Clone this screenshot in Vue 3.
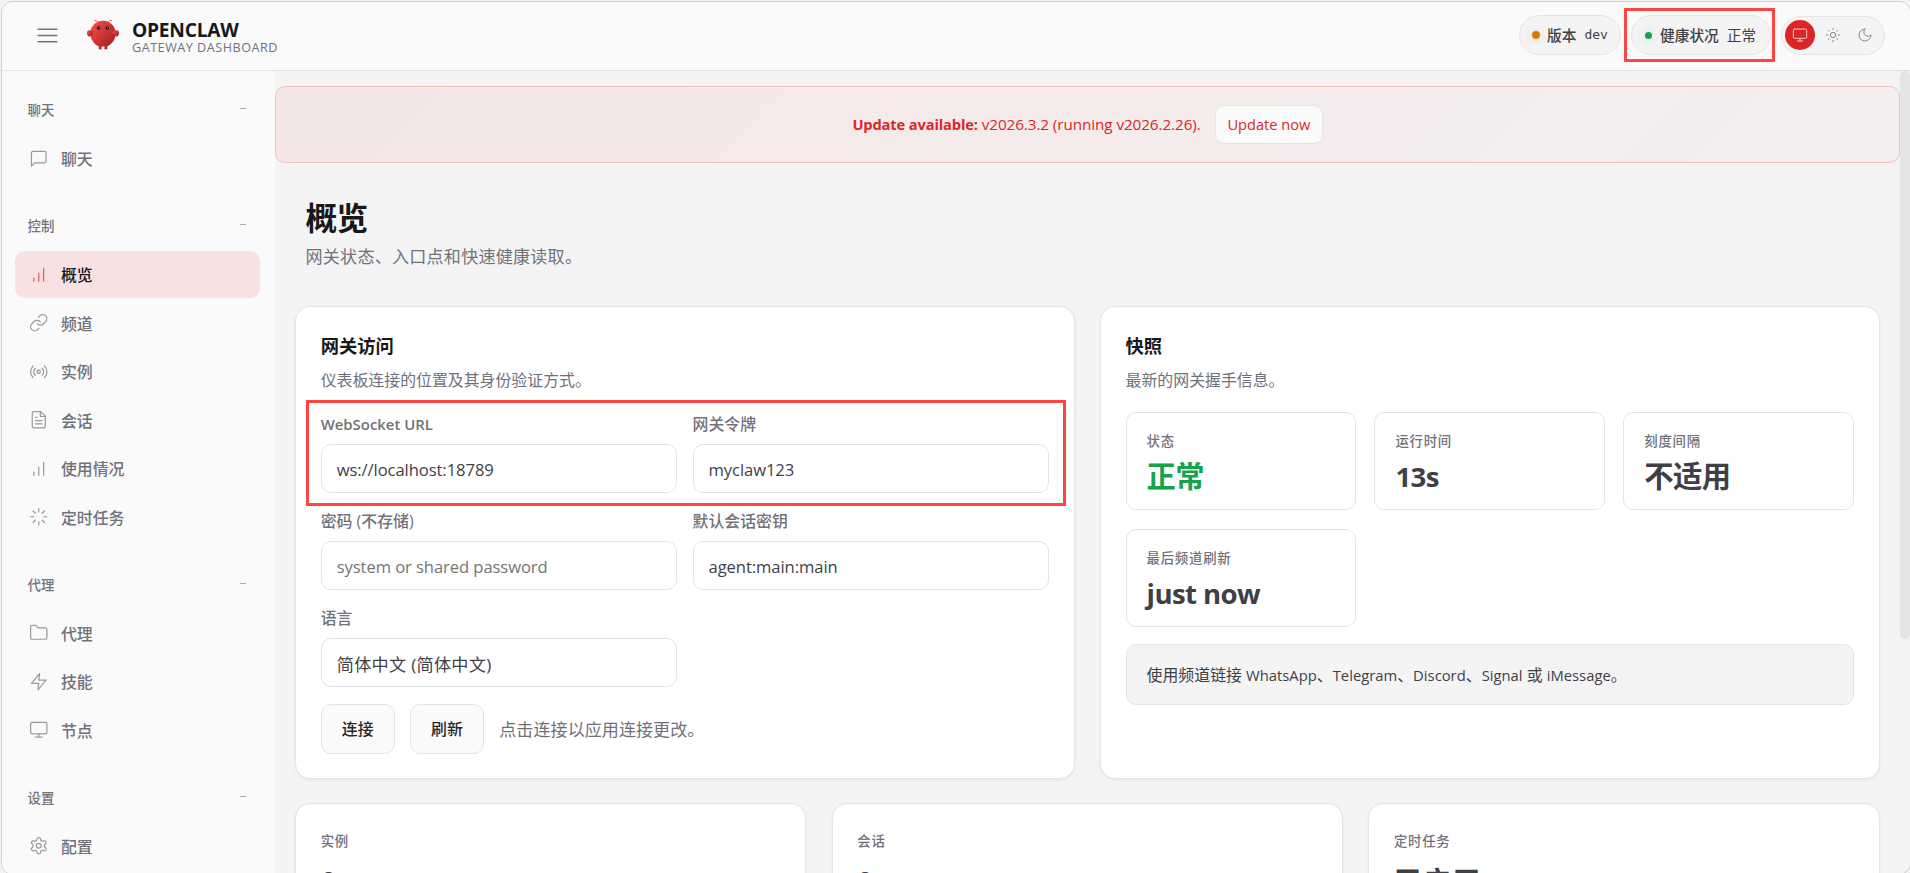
<template>
  <div class="shell">
    <header class="topbar">
      <div class="topbar-left">
        <button class="menu-toggle">
          <svg viewBox="0 0 24 24" class="icon"><path d="M3 6h18M3 12h18M3 18h18" /></svg>
        </button>
        <svg class="logo" viewBox="0 0 120 120">
          <defs>
            <linearGradient id="claw" x1="0%" y1="0%" x2="100%" y2="100%">
              <stop offset="0%" stop-color="#ff4d4d" />
              <stop offset="100%" stop-color="#991b1b" />
            </linearGradient>
          </defs>
          <g fill="url(#claw)">
            <path d="M60 10C30 10 15 35 15 55C15 75 30 95 45 100V110H55V100C55 100 60 102 65 100V110H75V100C90 95 105 75 105 55C105 35 90 10 60 10Z" />
            <path d="M20 45C5 40 0 50 5 60C10 70 20 65 25 55C28 48 25 45 20 45Z" />
            <path d="M100 45C115 40 120 50 115 60C110 70 100 65 95 55C92 48 95 45 100 45Z" />
          </g>
          <path d="M45 15Q35 5 30 8M75 15Q85 5 90 8" fill="none" stroke="#ff4d4d" stroke-width="3" stroke-linecap="round" />
          <circle cx="45" cy="35" r="6" fill="#050810" />
          <circle cx="75" cy="35" r="6" fill="#050810" />
          <circle cx="46" cy="34" r="2.5" fill="#00e5cc" />
          <circle cx="76" cy="34" r="2.5" fill="#00e5cc" />
        </svg>
        <div class="brand">
          <div class="brand-title">OPENCLAW</div>
          <div class="brand-sub">GATEWAY DASHBOARD</div>
        </div>
      </div>

      <div class="topbar-right">
        <div class="pill version">
          <span class="dot warn"></span>
          <span>版本</span>
          <span class="mono">dev</span>
        </div>
        <div class="pill health">
          <span class="dot ok"></span>
          <span>健康状况</span>
          <span class="mono cjk">正常</span>
          <div class="marker marker-health"></div>
        </div>
        <div class="theme-toggle">
          <button v-for="(t, i) in themes" :key="t" class="theme-btn" :class="{ active: i === 0 }">
            <svg viewBox="0 0 24 24" class="icon" v-html="icons[t]"></svg>
          </button>
        </div>
      </div>
    </header>

    <div class="body">
      <aside class="nav">
        <div v-for="group in groups" :key="group.label" class="nav-group">
          <div class="nav-label">
            <span>{{ group.label }}</span>
            <span class="nav-dash"></span>
          </div>
          <div class="nav-items">
            <a v-for="item in group.items" :key="item.name" class="nav-item" :class="{ active: item.active }">
              <svg viewBox="0 0 24 24" class="icon" v-html="icons[item.icon]"></svg>
              <span>{{ item.name }}</span>
            </a>
          </div>
        </div>
      </aside>

      <main class="content">
        <div class="update-banner">
          <span class="update-text"><strong>Update available:</strong> v2026.3.2 (running v2026.2.26).</span>
          <button class="update-btn">Update now</button>
        </div>

        <section class="page-header">
          <h1>概览</h1>
          <p>网关状态、入口点和快速健康读取。</p>
        </section>

        <section class="cards two">
          <div class="card">
            <h2>网关访问</h2>
            <p class="card-sub">仪表板连接的位置及其身份验证方式。</p>
            <div class="form-grid">
              <label v-for="f in fields" :key="f.label" class="field">
                <span :class="{ latin: f.latin }">{{ f.label }}</span>
                <input v-model="f.value" :placeholder="f.placeholder" :class="{ zh: f.zh }" />
              </label>
              <div class="marker marker-form"></div>
            </div>
            <div class="actions">
              <button class="btn">连接</button>
              <button class="btn">刷新</button>
              <span class="hint">点击连接以应用连接更改。</span>
            </div>
          </div>

          <div class="card">
            <h2>快照</h2>
            <p class="card-sub">最新的网关握手信息。</p>
            <div class="stats">
              <div v-for="s in stats" :key="s.label" class="stat">
                <div class="stat-label">{{ s.label }}</div>
                <div class="stat-value" :class="s.kind">{{ s.value }}</div>
              </div>
            </div>
            <div class="callout">使用频道链接 <span class="en">WhatsApp</span>、<span class="en">Telegram</span>、<span class="en">Discord</span>、<span class="en">Signal</span> 或 <span class="en">iMessage</span>。</div>
          </div>
        </section>

        <section class="cards three">
          <div v-for="c in counters" :key="c.label" class="card">
            <div class="stat-label">{{ c.label }}</div>
            <div class="stat-value" :class="c.kind">{{ c.value }}</div>
          </div>
        </section>
      </main>
      <div class="scrollbar"></div>
    </div>
  </div>
</template>

<script setup>
import { ref } from 'vue'

const themes = ['monitor', 'sun', 'moon']

const icons = {
  chat: '<path d="M21 15a2 2 0 0 1-2 2H7l-4 4V5a2 2 0 0 1 2-2h14a2 2 0 0 1 2 2z"/>',
  bars: '<path d="M12 20V10M18 20V4M6 20v-4"/>',
  link: '<path d="M10 13a5 5 0 0 0 7.54.54l3-3a5 5 0 0 0-7.07-7.07l-1.72 1.71"/><path d="M14 11a5 5 0 0 0-7.54-.54l-3 3a5 5 0 0 0 7.07 7.07l1.71-1.71"/>',
  radio: '<circle cx="12" cy="12" r="2"/><path d="M16.24 7.76a6 6 0 0 1 0 8.49m-8.48-.01a6 6 0 0 1 0-8.49m11.31-2.82a10 10 0 0 1 0 14.14m-14.14 0a10 10 0 0 1 0-14.14"/>',
  file: '<path d="M14.5 2H6a2 2 0 0 0-2 2v16a2 2 0 0 0 2 2h12a2 2 0 0 0 2-2V7.5L14.5 2z"/><path d="M14 2v6h6M16 13H8M16 17H8M10 9H8"/>',
  loader: '<path d="M12 2v4M12 18v4M4.93 4.93l2.83 2.83M16.24 16.24l2.83 2.83M2 12h4M18 12h4M4.93 19.07l2.83-2.83M16.24 7.76l2.83-2.83"/>',
  folder: '<path d="M4 20h16a2 2 0 0 0 2-2V8a2 2 0 0 0-2-2h-7.93a2 2 0 0 1-1.66-.9l-.82-1.2A2 2 0 0 0 7.93 3H4a2 2 0 0 0-2 2v13c0 1.1.9 2 2 2Z"/>',
  zap: '<path d="M13 2L3 14h9l-1 8 10-12h-9l1-8z"/>',
  monitor: '<rect x="2" y="3" width="20" height="14" rx="2"/><path d="M8 21h8M12 17v4"/>',
  gear: '<path d="M12.22 2h-.44a2 2 0 0 0-2 2v.18a2 2 0 0 1-1 1.73l-.43.25a2 2 0 0 1-2 0l-.15-.08a2 2 0 0 0-2.73.73l-.22.38a2 2 0 0 0 .73 2.73l.15.1a2 2 0 0 1 1 1.72v.51a2 2 0 0 1-1 1.74l-.15.09a2 2 0 0 0-.73 2.73l.22.38a2 2 0 0 0 2.73.73l.15-.08a2 2 0 0 1 2 0l.43.25a2 2 0 0 1 1 1.73V20a2 2 0 0 0 2 2h.44a2 2 0 0 0 2-2v-.18a2 2 0 0 1 1-1.73l.43-.25a2 2 0 0 1 2 0l.15.08a2 2 0 0 0 2.73-.73l.22-.39a2 2 0 0 0-.73-2.73l-.15-.08a2 2 0 0 1-1-1.74v-.5a2 2 0 0 1 1-1.74l.15-.09a2 2 0 0 0 .73-2.73l-.22-.38a2 2 0 0 0-2.73-.73l-.15.08a2 2 0 0 1-2 0l-.43-.25a2 2 0 0 1-1-1.73V4a2 2 0 0 0-2-2z"/><circle cx="12" cy="12" r="3"/>',
  sun: '<circle cx="12" cy="12" r="4"/><path d="M12 2v2M12 20v2M4.93 4.93l1.41 1.41M17.66 17.66l1.41 1.41M2 12h2M20 12h2M6.34 17.66l-1.41 1.41M19.07 4.93l-1.41 1.41"/>',
  moon: '<path d="M12 3a6 6 0 0 0 9 9 9 9 0 1 1-9-9z"/>'
}

const groups = [
  { label: '聊天', items: [{ name: '聊天', icon: 'chat' }] },
  {
    label: '控制',
    items: [
      { name: '概览', icon: 'bars', active: true },
      { name: '频道', icon: 'link' },
      { name: '实例', icon: 'radio' },
      { name: '会话', icon: 'file' },
      { name: '使用情况', icon: 'bars' },
      { name: '定时任务', icon: 'loader' }
    ]
  },
  {
    label: '代理',
    items: [
      { name: '代理', icon: 'folder' },
      { name: '技能', icon: 'zap' },
      { name: '节点', icon: 'monitor' }
    ]
  },
  { label: '设置', items: [{ name: '配置', icon: 'gear' }] }
]

const fields = ref([
  { label: 'WebSocket URL', value: 'ws://localhost:18789', latin: true },
  { label: '网关令牌', value: 'myclaw123' },
  { label: '密码 (不存储)', value: '', placeholder: 'system or shared password' },
  { label: '默认会话密钥', value: 'agent:main:main' },
  { label: '语言', value: '简体中文 (简体中文)', zh: true }
])

const stats = [
  { label: '状态', value: '正常', kind: 'good' },
  { label: '运行时间', value: '13s', kind: 'latin' },
  { label: '刻度间隔', value: '不适用' },
  { label: '最后频道刷新', value: 'just now', kind: 'latin' }
]

const counters = [
  { label: '实例', value: '0', kind: 'latin' },
  { label: '会话', value: '0', kind: 'latin' },
  { label: '定时任务', value: '已启用' }
]
</script>

<style>
body {
  background: #f3f3f3;
  overflow: hidden;
}
</style>

<style scoped>
* {
  box-sizing: border-box;
}

.shell {
  width: 1910px;
  height: 874px;
  margin: 1px 0 0 1px;
  border: 1px solid #cfcfcf;
  border-radius: 12px;
  overflow: hidden;
  display: flex;
  flex-direction: column;
  background: #f4f4f5;
  color: #3f3f46;
  font-family: "Open Sans", "Noto Sans CJK SC", sans-serif;
  font-size: 16px;
}

h1, h2, p {
  margin: 0;
}

button, input {
  font-family: inherit;
}

.icon {
  fill: none;
  stroke: currentColor;
  stroke-width: 1.5;
  stroke-linecap: round;
  stroke-linejoin: round;
  flex-shrink: 0;
}

/* top bar */
.topbar {
  height: 69px;
  flex-shrink: 0;
  display: flex;
  align-items: center;
  justify-content: space-between;
  padding: 0 25px 2px 23px;
  background: #fafafa;
  border-bottom: 1px solid #e2e2e5;
}

.topbar-left {
  display: flex;
  align-items: center;
}

.menu-toggle {
  width: 44px;
  height: 44px;
  padding: 0;
  border: none;
  background: none;
  color: #71717a;
  display: flex;
  align-items: center;
  justify-content: center;
}

.menu-toggle .icon {
  width: 25px;
  height: 25px;
}

.logo {
  width: 34px;
  height: 34px;
  margin-left: 16.5px;
}

.brand {
  margin-left: 12.5px;
  margin-top: 5px;
}

.brand-title {
  font-size: 19.2px;
  line-height: 20px;
  font-weight: 700;
  letter-spacing: -0.25px;
  color: #18181b;
}

.brand-sub {
  font-size: 12.6px;
  line-height: 15px;
  font-weight: 500;
  letter-spacing: 0.52px;
  color: #71717a;
}

.topbar-right {
  display: flex;
  align-items: center;
  gap: 10px;
}

.pill {
  position: relative;
  height: 39.5px;
  display: flex;
  align-items: center;
  border: 1px solid #e4e4e7;
  border-radius: 20px;
  background: #f4f4f5;
  font-size: 14.7px;
  font-weight: 500;
  white-space: nowrap;
}

.pill > span:not(.dot) {
  padding-bottom: 2px;
}

.version {
  width: 102px;
  padding-left: 12px;
}

.health {
  width: 140px;
  padding-left: 13px;
}

.dot {
  width: 8px;
  height: 8px;
  margin-right: 7px;
  border-radius: 50%;
}

.health .dot {
  width: 7px;
  height: 7px;
  margin-right: 8px;
}

.warn {
  background: #d97706;
  box-shadow: 0 0 10px rgba(217, 119, 6, 0.3);
}

.ok {
  background: #16a34a;
  box-shadow: 0 0 10px rgba(22, 163, 74, 0.3);
}

.mono {
  margin-left: 8px;
  font-family: "DejaVu Sans Mono", monospace;
  font-size: 13px;
  font-weight: 400;
}

.mono.cjk {
  font-family: "Noto Sans CJK SC", sans-serif;
  font-size: 14.7px;
}

.theme-toggle {
  width: 104px;
  height: 39px;
  display: flex;
  align-items: center;
  gap: 2.5px;
  padding-left: 3px;
  border: 1px solid #e4e4e7;
  border-radius: 20px;
  background: #f4f4f5;
}

.theme-btn {
  width: 30px;
  height: 30px;
  padding: 0;
  border: none;
  border-radius: 50%;
  background: none;
  color: #85858c;
  display: flex;
  align-items: center;
  justify-content: center;
}

.theme-btn .icon {
  width: 16px;
  height: 16px;
}

.theme-btn.active {
  background: #dc2626;
  color: #f8c9c9;
}

.marker {
  position: absolute;
  border: 3px solid #ff4444;
  pointer-events: none;
}

.marker-health {
  left: -8px;
  top: -8px;
  width: 151px;
  height: 54px;
}

/* layout */
.body {
  flex: 1;
  min-height: 0;
  display: flex;
}

.nav {
  width: 273px;
  flex-shrink: 0;
  padding: 23.3px 15px 0 13px;
  background: #fafafa;
}

.nav-group {
  margin-bottom: 28.4px;
}

.nav-label {
  height: 30px;
  display: flex;
  align-items: center;
  justify-content: space-between;
  padding: 0 14px 0 12.5px;
  margin-bottom: 10.7px;
  font-size: 13.4px;
  font-weight: 500;
  color: #71717a;
}

.nav-dash {
  width: 6.5px;
  height: 1px;
  margin-top: -1px;
  background: #a8a8ae;
}

.nav-items {
  display: flex;
  flex-direction: column;
  gap: 1.5px;
}

.nav-item {
  height: 47px;
  display: flex;
  align-items: center;
  gap: 12px;
  padding-left: 14.4px;
  border-radius: 10px;
  font-size: 15.9px;
  font-weight: 500;
  color: #71717a;
}

.nav-item .icon {
  width: 19.5px;
  height: 19.5px;
  opacity: 0.7;
}

.nav-item.active {
  background: #f8e1e1;
  color: #18181b;
}

.nav-item.active .icon {
  color: #dc2626;
}

.content {
  width: 1625px;
  flex-shrink: 0;
  overflow: hidden;
}

.scrollbar {
  width: 10px;
  height: 568px;
  border-radius: 5px;
  background: #e4e4e7;
}

.update-banner {
  height: 76.4px;
  margin-top: 15.3px;
  display: flex;
  align-items: center;
  justify-content: center;
  gap: 14.5px;
  border: 1px solid #f5bfbf;
  border-radius: 10px;
  background: linear-gradient(135deg, #f5e6e6, #f5ebeb 50%, #f2efef);
  color: #dc2626;
}

.update-text {
  font-size: 15.3px;
  font-weight: 500;
  letter-spacing: -0.1px;
}

.update-text strong {
  font-size: 14.7px;
  letter-spacing: -0.15px;
}

.update-btn {
  height: 38.6px;
  width: 107.5px;
  padding: 0;
  border: 1px solid #e4e4e7;
  border-radius: 9px;
  background: #fafafa;
  color: #dc2626;
  font-size: 14.6px;
  font-weight: 500;
}

.page-header {
  padding: 35px 30.5px 36px;
}

.page-header h1 {
  height: 40px;
  line-height: 40px;
  font-size: 31.7px;
  font-weight: 700;
  letter-spacing: -0.7px;
  color: #18181b;
}

.page-header p {
  height: 26px;
  line-height: 26px;
  margin-top: 6px;
  font-size: 17.1px;
  letter-spacing: 0.2px;
  color: #71717a;
}

.cards {
  display: grid;
  gap: 25.6px;
  padding: 0 20.5px 0 20.3px;
}

.two {
  grid-template-columns: repeat(2, 1fr);
}

.three {
  grid-template-columns: repeat(3, 1fr);
  margin-top: 24.4px;
}

.card {
  padding: 24.4px;
  border: 1px solid #e4e4e7;
  border-radius: 15px;
  background: #fff;
  box-shadow: 0 1px 3px rgba(0, 0, 0, 0.06);
}

.card h2 {
  height: 30px;
  line-height: 30px;
  font-size: 18.3px;
  font-weight: 700;
  color: #18181b;
}

.card-sub {
  height: 24px;
  line-height: 24px;
  margin: 7px 0 19.8px;
  font-size: 15.9px;
  color: #71717a;
}

.form-grid {
  position: relative;
  display: grid;
  grid-template-columns: 1fr 1fr;
  gap: 16.3px 15.2px;
}

.field span {
  display: block;
  height: 24px;
  line-height: 24px;
  margin-bottom: 8px;
  font-size: 15.9px;
  font-weight: 500;
  color: #71717a;
}

.field .latin {
  font-size: 14.9px;
  font-weight: 600;
}

.field input {
  display: block;
  width: 100%;
  height: 48.7px;
  padding: 2px 15px 0;
  border: 1px solid #e4e4e7;
  border-radius: 10px;
  background: #fff;
  color: #3f3f46;
  font-size: 16.6px;
  letter-spacing: -0.08px;
  outline: none;
}

.field .zh {
  font-size: 17.2px;
  letter-spacing: 0.25px;
}

.field input::placeholder {
  color: #757575;
}

.marker-form {
  left: -15px;
  top: -11.9px;
  width: 760px;
  height: 106px;
}

.actions {
  display: flex;
  align-items: center;
  margin-top: 17.3px;
}

.btn {
  width: 74px;
  height: 49.7px;
  margin-right: 15.3px;
  padding: 0;
  border: 1px solid #e4e4e7;
  border-radius: 10px;
  background: #fafafa;
  color: #27272a;
  font-size: 15.9px;
  font-weight: 500;
}

.hint {
  font-size: 17.1px;
  color: #71717a;
}

.stats {
  display: grid;
  grid-template-columns: repeat(3, 1fr);
  gap: 18.6px 18px;
}

.stat {
  height: 98.4px;
  padding: 18px 20px;
  border: 1px solid #e4e4e7;
  border-radius: 10px;
}

.stat-label {
  height: 20px;
  line-height: 20px;
  font-size: 13.4px;
  font-weight: 500;
  letter-spacing: 0.75px;
  color: #71717a;
}

.stat-value {
  height: 36px;
  line-height: 36px;
  margin-top: 7px;
  font-size: 29.3px;
  font-weight: 700;
  letter-spacing: -0.6px;
}

.stat-value.latin {
  font-size: 27.6px;
}

.good {
  color: #16a34a;
}

.callout {
  height: 61px;
  line-height: 61px;
  margin-top: 17px;
  padding-left: 20px;
  border: 1px solid #e4e4e7;
  border-radius: 10px;
  background: #f4f4f5;
  font-size: 15.9px;
}

.en {
  font-size: 14.8px;
}

.three .card {
  height: 140px;
}

.three .stat-label {
  margin-top: 2px;
}

.three .stat-value {
  margin-top: 13px;
}

.three .stat-value.latin {
  margin-top: 11px;
}
</style>
